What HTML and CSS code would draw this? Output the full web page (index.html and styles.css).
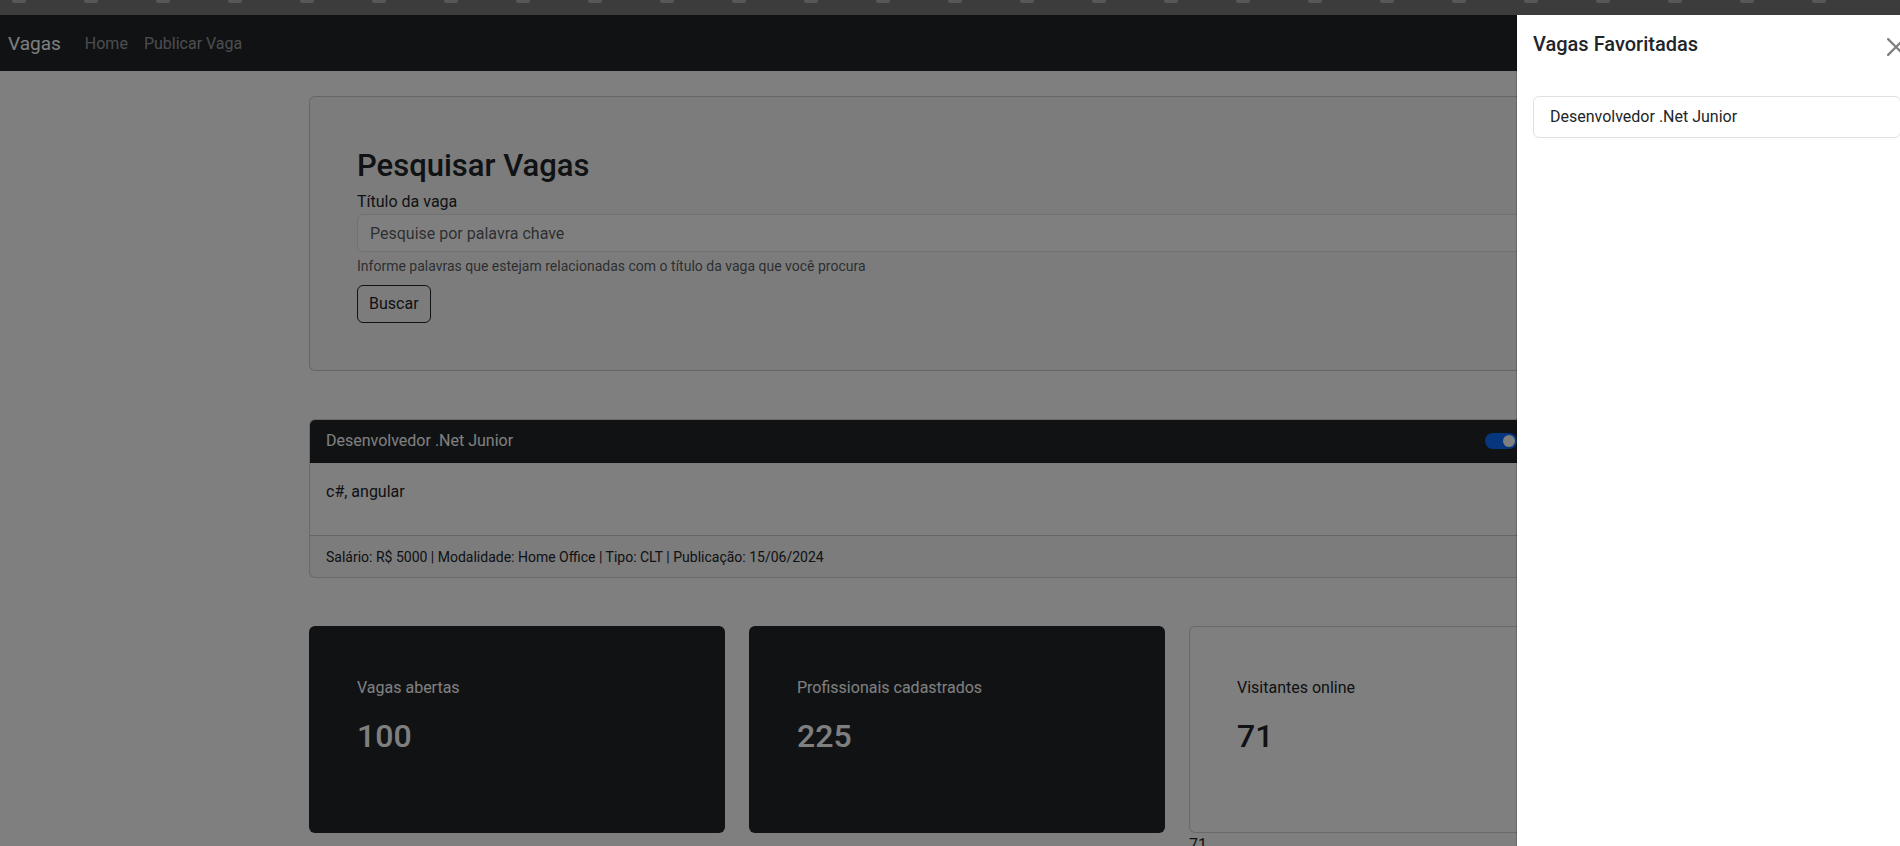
FILE: index.html
```html
<!DOCTYPE html>
<html lang="pt-BR">
<head>
<meta charset="utf-8">
<title>Vagas</title>
<link rel="stylesheet" href="styles.css">
</head>
<body>
<div class="chrome-strip">
  <span></span><span></span><span></span><span></span><span></span><span></span><span></span><span></span><span></span><span></span><span></span><span></span><span></span><span></span><span></span><span></span><span></span><span></span><span></span><span></span><span></span><span></span><span></span><span></span><span></span><span></span>
</div>
<div class="app">
  <nav class="navbar">
    <a class="brand" href="#">Vagas</a>
    <ul class="nav-links">
      <li><a href="#">Home</a></li>
      <li><a href="#">Publicar Vaga</a></li>
    </ul>
  </nav>
  <main class="container">
    <section class="search-card">
      <h2 class="search-title">Pesquisar Vagas</h2>
      <label class="form-label" for="q">Título da vaga</label>
      <input class="form-control" id="q" type="text" placeholder="Pesquise por palavra chave">
      <div class="form-text">Informe palavras que estejam relacionadas com o título da vaga que você procura</div>
      <button class="btn-outline" type="button">Buscar</button>
    </section>

    <article class="job-card">
      <header class="job-header">
        <span>Desenvolvedor .Net Junior</span>
        <span class="switch"><span class="knob"></span></span>
      </header>
      <div class="job-body"><p>c#, angular</p></div>
      <footer class="job-footer">Salário: R$ 5000 | Modalidade: Home Office | Tipo: CLT | Publicação: 15/06/2024</footer>
    </article>

    <section class="stats">
      <div class="stat stat-dark">
        <p class="stat-label">Vagas abertas</p>
        <h2 class="stat-value">100</h2>
      </div>
      <div class="stat stat-dark">
        <p class="stat-label">Profissionais cadastrados</p>
        <h2 class="stat-value">225</h2>
      </div>
      <div class="stat-col">
        <div class="stat stat-light">
          <p class="stat-label">Visitantes online</p>
          <h2 class="stat-value">71</h2>
        </div>
        <div class="stat-note">71</div>
      </div>
    </section>
  </main>
</div>
<div class="backdrop"></div>
<aside class="offcanvas">
  <div class="oc-header">
    <h5 class="oc-title">Vagas Favoritadas</h5>
    <button class="btn-close" type="button" aria-label="Fechar">
      <svg viewBox="0 0 16 16" width="18" height="18"><path d="M.293.293a1 1 0 0 1 1.414 0L8 6.586 14.293.293a1 1 0 1 1 1.414 1.414L9.414 8l6.293 6.293a1 1 0 0 1-1.414 1.414L8 9.414l-6.293 6.293a1 1 0 0 1-1.414-1.414L6.586 8 .293 1.707a1 1 0 0 1 0-1.414z"/></svg>
    </button>
  </div>
  <div class="oc-body">
    <ul class="list-group">
      <li class="list-item">Desenvolvedor .Net Junior</li>
    </ul>
  </div>
</aside>
</body>
</html>
```
FILE: styles.css
```css
html, body {
  margin: 0;
  height: 846px;
  overflow: hidden;
}
body {
  font-family: Roboto, "Liberation Sans", sans-serif;
  font-size: 16px;
  line-height: 1.5;
  color: #212529;
  background: #fff;
}

.chrome-strip {
  height: 15px;
  background: #3c3c3c;
  display: flex;
  gap: 58px;
  padding-left: 12px;
  overflow: hidden;
}
.chrome-strip span {
  flex: none;
  width: 14px;
  height: 3px;
  background: #575757;
  border-radius: 0 0 2px 2px;
}

.navbar {
  height: 56px;
  box-sizing: border-box;
  padding: 2px 8px 0;
  background: #212529;
  display: flex;
  align-items: center;
}
.brand {
  font-size: 19px;
  color: #fff;
  text-decoration: none;
  margin-right: 16px;
}
.nav-links {
  display: flex;
  list-style: none;
  margin: 0;
  padding: 0;
}
.nav-links a {
  display: block;
  color: rgba(255, 255, 255, .55);
  padding: 8px;
  text-decoration: none;
}

.container {
  width: 1296px;
  margin-left: 309px;
}

.search-card {
  margin-top: 25px;
  background: #f8f9fa;
  border: 1px solid rgba(0, 0, 0, .175);
  border-radius: 6px;
  padding: 47px;
}
.search-title {
  font-size: 31px;
  font-weight: 500;
  line-height: 1.2;
  margin: 3px 0 6px;
}
.form-label {
  display: block;
}
.form-control {
  display: block;
  width: 100%;
  box-sizing: border-box;
  height: 38px;
  padding: 6px 12px;
  font: inherit;
  border: 1px solid #dee2e6;
  border-radius: 6px;
  background: #fff;
  color: #212529;
}
.form-control::placeholder {
  color: rgba(33, 37, 41, .75);
}
.form-text {
  margin-top: 4px;
  font-size: 14px;
  line-height: 1.5;
  color: rgba(33, 37, 41, .75);
}
.btn-outline {
  display: block;
  margin-top: 8px;
  font: inherit;
  line-height: 1.5;
  padding: 6px 11px;
  border: 1px solid #212529;
  border-radius: 6px;
  background: transparent;
  color: #212529;
}

.job-card {
  margin-top: 48px;
  border: 1px solid rgba(0, 0, 0, .175);
  border-radius: 6px;
  overflow: hidden;
  background: #fff;
}
.job-header {
  background: #212529;
  color: #fff;
  display: flex;
  align-items: center;
  justify-content: space-between;
  padding: 9px 16px;
  border-bottom: 1px solid rgba(0, 0, 0, .175);
}
.switch {
  width: 32px;
  height: 16px;
  border-radius: 8px;
  background: #0d6efd;
  display: flex;
  align-items: center;
  justify-content: flex-end;
  padding: 0 2px;
  box-sizing: border-box;
  margin-right: 71px;
}
.knob {
  width: 12px;
  height: 12px;
  border-radius: 50%;
  background: #fff;
}
.job-body {
  padding: 17px 16px 16px;
}
.job-body p {
  margin: 0 0 15px;
}
.job-footer {
  padding: 11px 16px 9px;
  font-size: 14px;
  line-height: 21px;
  background: rgba(33, 37, 41, .03);
  border-top: 1px solid rgba(0, 0, 0, .175);
}

.stats {
  margin-top: 48px;
  display: grid;
  grid-template-columns: repeat(3, 1fr);
  gap: 24px;
}
.stat {
  height: 207px;
  box-sizing: border-box;
  padding: 50px 48px 48px;
  border-radius: 6px;
}
.stat-dark {
  background: #212529;
  color: #fff;
}
.stat-light {
  background: #fff;
  border: 1px solid rgba(0, 0, 0, .175);
  padding: 49px 47px 47px;
  color: #212529;
}
.stat-label {
  margin: 0 0 17px;
}
.stat-value {
  margin: 0;
  font-size: 32px;
  font-weight: 500;
  line-height: 1.2;
}

.backdrop {
  position: fixed;
  top: 15px;
  left: 0;
  right: 0;
  bottom: 0;
  background: #000;
  opacity: .5;
  z-index: 1040;
}

.offcanvas {
  position: fixed;
  top: 15px;
  left: 1516px;
  width: 400px;
  bottom: 0;
  background: #fff;
  background-clip: padding-box;
  border-left: 1px solid rgba(0, 0, 0, .175);
  z-index: 1045;
}
.oc-header {
  display: flex;
  align-items: center;
  padding: 13px 16px 16px;
}
.oc-title {
  margin: 0;
  font-size: 20px;
  font-weight: 500;
  line-height: 1.5;
}
.btn-close {
  margin-left: auto;
  margin-right: -8px;
  margin-top: 6px;
  width: 26px;
  height: 26px;
  padding: 4px;
  border: 0;
  background: transparent;
  display: flex;
}
.btn-close svg {
  fill: #000;
  opacity: .5;
}
.oc-body {
  padding: 20px 16px 16px;
}
.list-group {
  margin: 0;
  padding: 0;
  list-style: none;
}
.list-item {
  border: 1px solid #dee2e6;
  border-radius: 6px;
  padding: 8px 16px;
}
```
